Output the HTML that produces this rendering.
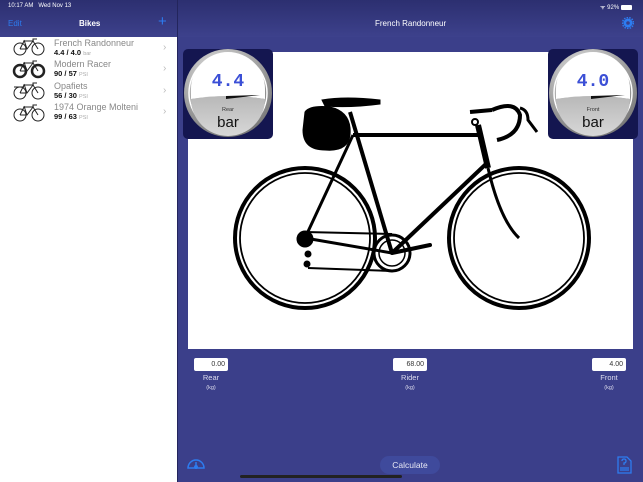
<!DOCTYPE html>
<html><head><meta charset="utf-8"><style>
*{margin:0;padding:0;box-sizing:border-box}
body{width:643px;height:482px;overflow:hidden;font-family:"Liberation Sans",sans-serif;background:#3b3f8a;position:relative}
.hdr{position:absolute;left:0;top:0;width:643px;height:37px;background:linear-gradient(#2c2f70,#3d418c)}
.side{position:absolute;left:0;top:37px;width:177px;height:445px;background:#fff}
.div{position:absolute;left:177px;top:0;width:1px;height:482px;background:#23255c}
.t{position:absolute;white-space:nowrap}
.row{position:absolute;left:0;width:177px;height:22px}
.row .n{position:absolute;left:54px;top:0;font-size:9px;color:#888}
.row .v{position:absolute;left:54px;top:10px;font-size:7.5px;font-weight:bold;color:#111}
.row .v span{font-weight:normal;color:#aaa;font-size:5.5px}
.row .c{position:absolute;left:163px;top:4px;font-size:10px;color:#bbb}
.canvas{position:absolute;left:188px;top:52px;width:445px;height:297px;background:#fff}
.gauge{position:absolute;width:90px;height:90px;background:#141650;border-radius:5px}
.inp{position:absolute;width:34px;height:13px;background:#fff;border-radius:2px;font-size:7px;color:#333;text-align:right;padding:3px 3px 0 0}
.lbl{position:absolute;width:40px;text-align:center;color:#dde;font-size:7.5px;line-height:9px}
.lbl small{font-size:5.5px}
</style></head><body>
<div class="hdr"></div>
<div class="side"></div>
<div class="div"></div>
<div class="t" style="left:8px;top:3px;font-size:6px;color:#fff">10:17 AM&nbsp;&nbsp; Wed Nov 13</div>
<div class="t" style="left:8px;top:19px;font-size:8px;color:#2d7cf0">Edit</div>
<div class="t" style="left:79px;top:19px;font-size:8px;color:#fff;font-weight:bold">Bikes</div>
<div class="t" style="left:158px;top:13px;font-size:15px;color:#2d7cf0">+</div>
<div class="t" style="left:375px;top:19px;font-size:8px;color:#fff">French Randonneur</div>
<div class="t" style="left:600px;top:3px;font-size:6px;color:#fff">ᯤ 92% <span style="display:inline-block;width:11px;height:5px;background:#fff;border-radius:1px;vertical-align:middle"></span></div>
<svg style="position:absolute;left:622px;top:17px" width="12" height="12" viewBox="0 0 12 12"><circle cx="6" cy="6" r="4.5" fill="#2d7cf0"/><circle cx="6" cy="6" r="5.5" fill="none" stroke="#2d7cf0" stroke-width="1.5" stroke-dasharray="1.5 1.2"/><circle cx="6" cy="6" r="1.8" fill="#3b3f8a"/></svg>

<svg style="position:absolute;left:0;top:37px" width="177" height="90" viewBox="0 0 177 90" fill="none" stroke="#222" stroke-width="1">
<g><circle cx="20" cy="12" r="6"/><circle cx="38" cy="12" r="6"/><path d="M20 12 L27 12 L33 4 L24 4 L20 12 M27 12 L24 3 M33 4 L38 12 M33 4 L33 2 L37 2"/></g>
<g transform="translate(0,22)"><circle cx="20" cy="12" r="6" stroke-width="2.5"/><circle cx="38" cy="12" r="6" stroke-width="2.5"/><path d="M20 12 L27 12 L33 4 L24 4 L20 12 M27 12 L24 3 M33 4 L38 12 M33 4 L33 2 L37 2"/></g>
<g transform="translate(0,44)"><circle cx="20" cy="12" r="6"/><circle cx="38" cy="12" r="6"/><path d="M20 12 L27 12 L33 4 L24 4 L20 12 M27 12 L24 3 M33 4 L38 12 M33 4 L33 2 L37 2 M14 6 L24 6"/></g>
<g transform="translate(0,66)"><circle cx="20" cy="12" r="6"/><circle cx="38" cy="12" r="6"/><path d="M20 12 L27 12 L33 4 L24 4 L20 12 M27 12 L24 3 M33 4 L38 12 M33 4 L33 2 L37 2"/></g>
</svg>
<div class="row" style="top:38px"><div class="n">French Randonneur</div><div class="v">4.4 / 4.0 <span>bar</span></div><div class="c">›</div></div>
<div class="row" style="top:59px"><div class="n">Modern Racer</div><div class="v">90 / 57 <span>PSI</span></div><div class="c">›</div></div>
<div class="row" style="top:81px"><div class="n">Opafiets</div><div class="v">56 / 30 <span>PSI</span></div><div class="c">›</div></div>
<div class="row" style="top:102px"><div class="n">1974 Orange Molteni</div><div class="v">99 / 63 <span>PSI</span></div><div class="c">›</div></div>

<div class="canvas"></div>
<svg style="position:absolute;left:0;top:0" width="643" height="482" viewBox="0 0 643 482" fill="none" stroke="#000">
<circle cx="305" cy="238" r="70" stroke-width="4"/><circle cx="305" cy="238" r="65" stroke-width="1.8"/>
<circle cx="519" cy="238" r="70" stroke-width="4"/><circle cx="519" cy="238" r="65" stroke-width="1.8"/>
<path d="M353 135 L479 135" stroke-width="4"/>
<path d="M350 112 L392 253" stroke-width="4"/>
<path d="M487 163 L392 253" stroke-width="4"/>
<path d="M478 125 L488 168" stroke-width="6"/>
<path d="M305 238 L353 135" stroke-width="3"/>
<path d="M305 238 L392 253" stroke-width="3"/>
<path d="M488 168 Q500 220 519 238" stroke-width="3"/>
<path d="M305 232 L392 234 M308 268 L392 271" stroke-width="2"/>
<circle cx="392" cy="253" r="18" stroke-width="3"/><circle cx="392" cy="253" r="13" stroke-width="1.5"/>
<path d="M392 253 L430 245" stroke-width="4" stroke-linecap="round"/>
<path d="M470 112 L492 110" stroke-width="4"/>
<path d="M492 110 Q515 100 520 115 Q520 135 497 140" stroke-width="4"/>
<path d="M520 108 Q528 110 528 120 L537 132" stroke-width="3"/>
<path d="M322 100 Q345 96 380 100 L380 104 Q350 108 325 106 Z" fill="#000"/>
<path d="M305 112 Q310 105 330 107 Q352 112 350 135 Q348 152 325 150 Q303 150 303 130 Z" fill="#000"/>
<circle cx="305" cy="239" r="8" fill="#000"/>
<circle cx="308" cy="254" r="3" fill="#000"/><circle cx="307" cy="264" r="3" fill="#000"/>
<circle cx="475" cy="122" r="3" stroke-width="2"/>
</svg>

<div class="gauge" style="left:183px;top:49px"></div>
<div class="gauge" style="left:548px;top:49px"></div>
<svg style="position:absolute;left:0;top:0" width="643" height="482" viewBox="0 0 643 482">
<defs><radialGradient id="g" cx="0.4" cy="0.3" r="0.8"><stop offset="0" stop-color="#eee"/><stop offset="1" stop-color="#6a6a6a"/></radialGradient>
<linearGradient id="b" x1="0" y1="0" x2="0" y2="1"><stop offset="0" stop-color="#b8b8b8"/><stop offset="1" stop-color="#d8d8d8"/></linearGradient></defs>
<g>
<circle cx="228" cy="93" r="44" fill="url(#g)"/>
<circle cx="228" cy="93" r="39" fill="none" stroke="#fff" stroke-width="1.5"/>
<path d="M191 89 A37 37 0 0 1 265 89 L265 99 Q228 93 191 99 Z" fill="#fff"/>
<path d="M191 99 Q228 93 265 99 A37 37 0 0 1 191 99 Z" fill="url(#b)"/>
<path d="M226 96 L260 95 L226 99 Z" fill="#111"/>
<text x="228" y="86" font-family="Liberation Mono" font-weight="bold" font-size="18" fill="#3b4fd6" text-anchor="middle">4.4</text>
<text x="228" y="111" font-size="5.5" fill="#333" text-anchor="middle" font-family="Liberation Sans">Rear</text>
<text x="228" y="127" font-size="15" fill="#111" text-anchor="middle" font-family="Liberation Sans">bar</text>
</g>
<g transform="translate(365,0)">
<circle cx="228" cy="93" r="44" fill="url(#g)"/>
<circle cx="228" cy="93" r="39" fill="none" stroke="#fff" stroke-width="1.5"/>
<path d="M191 89 A37 37 0 0 1 265 89 L265 99 Q228 93 191 99 Z" fill="#fff"/>
<path d="M191 99 Q228 93 265 99 A37 37 0 0 1 191 99 Z" fill="url(#b)"/>
<path d="M226 96 L260 95 L226 99 Z" fill="#111"/>
<text x="228" y="86" font-family="Liberation Mono" font-weight="bold" font-size="18" fill="#3b4fd6" text-anchor="middle">4.0</text>
<text x="228" y="111" font-size="5.5" fill="#333" text-anchor="middle" font-family="Liberation Sans">Front</text>
<text x="228" y="127" font-size="15" fill="#111" text-anchor="middle" font-family="Liberation Sans">bar</text>
</g>
</svg>

<div class="inp" style="left:194px;top:358px">0.00</div>
<div class="lbl" style="left:191px;top:373px">Rear<br><small>(kg)</small></div>
<div class="inp" style="left:393px;top:358px">68.00</div>
<div class="lbl" style="left:390px;top:373px">Rider<br><small>(kg)</small></div>
<div class="inp" style="left:592px;top:358px">4.00</div>
<div class="lbl" style="left:589px;top:373px">Front<br><small>(kg)</small></div>

<div style="position:absolute;left:380px;top:456px;width:60px;height:18px;border-radius:9px;background:#3f4a9c;color:#e8e8f4;font-size:8.5px;text-align:center;line-height:18px">Calculate</div>
<div style="position:absolute;left:240px;top:475px;width:162px;height:3px;border-radius:2px;background:#222"></div>
<svg style="position:absolute;left:186px;top:455px" width="20" height="16" viewBox="0 0 20 16" fill="none" stroke="#2d7cf0" stroke-width="1.5"><path d="M2 13 A8 8 0 1 1 18 13 Z"/><path d="M10 7 L10 12"/><circle cx="10" cy="12" r="1.2" fill="#2d7cf0"/></svg>
<svg style="position:absolute;left:617px;top:456px" width="15" height="18" viewBox="0 0 15 18" fill="none" stroke="#2d7cf0" stroke-width="1.3"><path d="M1 1 L10 1 L14 5 L14 17 L1 17 Z"/><path d="M5 5 Q5 3 7 3 Q9 3 9 5 Q9 7 7 7 L7 9"/><path d="M3 12 L12 12 M3 14 L12 14"/></svg>
</body></html>
